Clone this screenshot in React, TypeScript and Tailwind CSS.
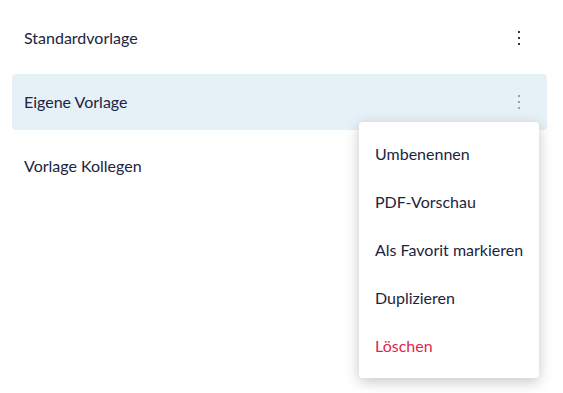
import React from "react";

const rows = ["Standardvorlage", "Eigene Vorlage", "Vorlage Kollegen"];
const menuItems = ["Umbenennen", "PDF-Vorschau", "Als Favorit markieren", "Duplizieren"];

function Kebab({ light }: { light?: boolean }) {
    const dot = light ? "bg-[#9aa0ab]" : "bg-[#2f3550]";
    return (
        <div className="flex flex-col gap-1 items-center w-4">
            <span className={`block w-[2px] h-[2px] ${dot}`}></span>
            <span className={`block w-[2px] h-[2px] ${dot}`}></span>
            <span className={`block w-[2px] h-[2px] ${dot}`}></span>
        </div>
    );
}

export default function App() {
    return (
        <div className="w-[563px] h-[393px] bg-white font-['Lato','Liberation_Sans',sans-serif] text-base text-[#1c2440] relative overflow-hidden">
            <div className="flex flex-col gap-2 pt-[10px] pl-3 pr-4">
                {rows.map((label, i) => (
                    <div
                        key={label}
                        className={`h-14 flex items-center justify-between pl-3 pr-5 rounded ${i === 1 ? "bg-[#e6f0f7]" : ""}`}
                    >
                        <span>{label}</span>
                        {i < 2 && <Kebab light={i === 1} />}
                    </div>
                ))}
            </div>

            {/* context menu for "Eigene Vorlage" */}
            <div className="absolute left-[359px] top-[122px] w-[180px] bg-white rounded py-2 shadow-[0_4px_14px_rgba(0,0,0,0.22)]">
                {menuItems.map((item) => (
                    <div key={item} className="h-12 flex items-center pl-4 whitespace-nowrap">
                        {item}
                    </div>
                ))}
                <div className="h-12 flex items-center pl-4 text-[#e3264f]">Löschen</div>
            </div>
        </div>
    );
}
